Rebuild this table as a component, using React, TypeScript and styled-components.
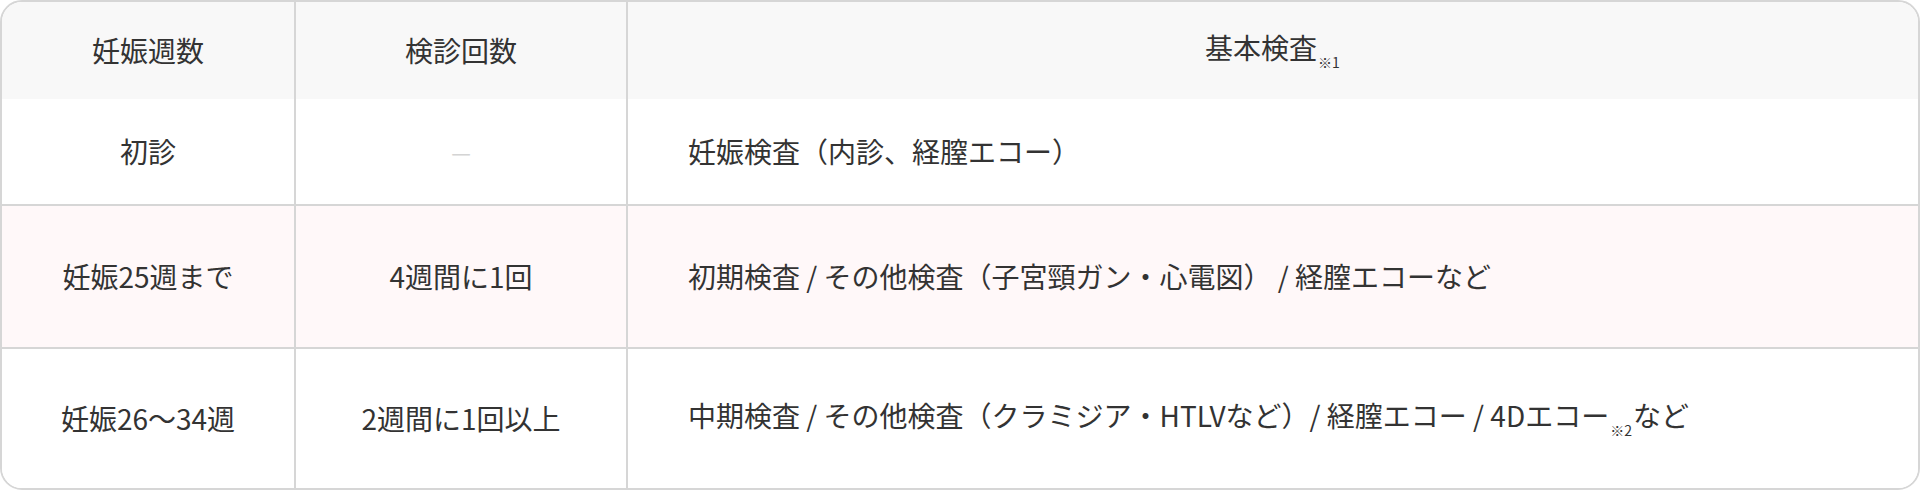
import styled, { createGlobalStyle } from 'styled-components'

const GlobalStyle = createGlobalStyle`
  html, body {
    margin: 0;
    padding: 0;
    background: #ffffff;
  }
  * {
    box-sizing: border-box;
  }
`

const TableWrap = styled.div`
  width: 1920px;
  height: 490px;
  border: 2px solid #d6d6d6;
  border-radius: 22px;
  overflow: hidden;
  background: #ffffff;
  font-family: 'Noto Sans CJK JP', 'Noto Sans', sans-serif;
  color: #333333;
`

const Row = styled.div<{ $height: number; $bg?: string; $divider?: boolean }>`
  display: grid;
  grid-template-columns: 292px 332px 1fr;
  height: ${(p) => p.$height}px;
  background: ${(p) => p.$bg || '#ffffff'};
  border-top: ${(p) => (p.$divider ? '2px solid #d6d6d6' : 'none')};
`

const Cell = styled.div<{ $left?: boolean; $first?: boolean }>`
  display: flex;
  align-items: center;
  justify-content: ${(p) => (p.$left ? 'flex-start' : 'center')};
  padding-left: ${(p) => (p.$left ? '60px' : '0')};
  border-left: ${(p) => (p.$first ? 'none' : '2px solid #d6d6d6')};
  font-size: 28px;
  line-height: 1.4;
  white-space: nowrap;
`

const Label = styled.span`
  display: inline-block;
`

const Note = styled.span`
  font-size: 14px;
  vertical-align: -9px;
  margin: 0 1px;
`

const Empty = styled.span`
  font-size: 22px;
  color: #d4d4d4;
`

function App() {
  return (
    <>
      <GlobalStyle />
      <TableWrap>
        <Row $height={97} $bg="#f8f8f8">
          <Cell $first>妊娠週数</Cell>
          <Cell>検診回数</Cell>
          <Cell>
            <Label>
              基本検査<Note>※1</Note>
            </Label>
          </Cell>
        </Row>
        <Row $height={105}>
          <Cell $first>初診</Cell>
          <Cell>
            <Empty>—</Empty>
          </Cell>
          <Cell $left>妊娠検査（内診、経膣エコー）</Cell>
        </Row>
        <Row $height={143} $bg="#fff8f9" $divider>
          <Cell $first>妊娠25週まで</Cell>
          <Cell>4週間に1回</Cell>
          <Cell $left>初期検査 / その他検査（子宮頸ガン・心電図） / 経膣エコーなど</Cell>
        </Row>
        <Row $height={141} $divider>
          <Cell $first>妊娠26〜34週</Cell>
          <Cell>2週間に1回以上</Cell>
          <Cell $left>
            <Label>
              中期検査 / その他検査（クラミジア・HTLVなど）/ 経膣エコー / 4Dエコー<Note>※2</Note>など
            </Label>
          </Cell>
        </Row>
      </TableWrap>
    </>
  )
}

export default App
